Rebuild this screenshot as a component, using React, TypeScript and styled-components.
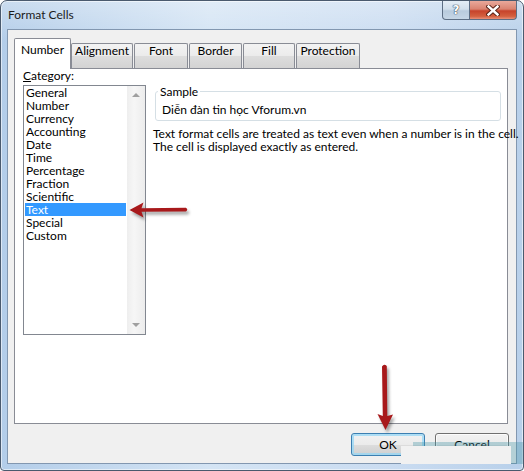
import React from "react";
import styled, { createGlobalStyle, css } from "styled-components";

const GlobalStyle = createGlobalStyle`
  body {
    margin: 0;
    background: #fff;
    font-family: "Lato", "Noto Sans", sans-serif;
    font-size: 12px;
    color: #000;
  }
`;

const Window = styled.div`
  position: relative;
  box-sizing: border-box;
  width: 524px;
  height: 471px;
  display: flex;
  flex-direction: column;
  border: 1px solid #4a5a6e;
  border-radius: 7px 7px 4px 4px;
  overflow: hidden;
  background: linear-gradient(180deg, rgba(255, 255, 255, 0.3), rgba(255, 255, 255, 0) 40px),
    linear-gradient(90deg, #b3cde9 0%, #d4e4f4 40%, #cadcf1 75%, #b8d0ea 100%);
  box-shadow: inset 0 0 0 1px rgba(255, 255, 255, 0.55);
`;

const TitleBar = styled.div`
  display: flex;
  align-items: flex-start;
  height: 28px;
  flex-shrink: 0;
`;

const Title = styled.span`
  padding-left: 7px;
  line-height: 28px;
  font-size: 12px;
  color: #1b1b1b;
`;

const CaptionButtons = styled.div`
  display: flex;
  margin-left: auto;
  margin-right: 6px;
`;

const CaptionButton = styled.div<{ $close?: boolean }>`
  box-sizing: border-box;
  width: ${(p) => (p.$close ? 47 : 28)}px;
  height: 19px;
  display: flex;
  align-items: center;
  justify-content: center;
  border: 1px solid #5d6e84;
  border-top: none;
  ${(p) =>
    p.$close
      ? css`
          border-radius: 0 0 4px 0;
          border-left: none;
          background: linear-gradient(180deg, #e9a99b 0%, #d98371 45%, #c7432b 55%, #d4603f 85%, #e8907a 100%);
        `
      : css`
          border-radius: 0 0 0 4px;
          background: linear-gradient(180deg, #e4edf6 0%, #d2dfec 45%, #b9cbdd 55%, #c6d6e6 100%);
        `}
`;

const HelpGlyph = styled.span`
  font-family: "DejaVu Sans", sans-serif;
  font-weight: bold;
  font-size: 12px;
  line-height: 12px;
  color: #fff;
  text-shadow: 0 0 1px #39495c, 0 0 1px #39495c, 0 0 1px #39495c;
`;

const Client = styled.div`
  flex: 1;
  display: flex;
  flex-direction: column;
  margin: 0 6px 6px;
  padding: 8px 8px 0 6px;
  border: 1px solid #8297b0;
  background: #f0f0f0;
`;

const TabStrip = styled.div`
  position: relative;
  z-index: 1;
  display: flex;
  align-items: flex-end;
  gap: 1px;
  height: 31px;
`;

const Tab = styled.div<{ $active?: boolean; $w: number }>`
  box-sizing: border-box;
  width: ${(p) => p.$w}px;
  text-align: center;
  line-height: 13px;
  border: 1px solid #898c95;
  border-bottom: none;
  border-radius: 2px 2px 0 0;
  ${(p) =>
    p.$active
      ? css`
          height: 31px;
          padding-top: 4px;
          margin-right: -1px;
          background: #fff;
          position: relative;
          z-index: 2;
        `
      : css`
          height: 25px;
          margin-bottom: 1px;
          background: linear-gradient(180deg, #f3f3f3 0%, #ebebeb 50%, #dddddd 51%, #d3d3d3 100%);
        `}
`;

const Panel = styled.div`
  box-sizing: border-box;
  height: 356px;
  margin-top: -1px;
  display: flex;
  gap: 7px;
  padding: 0 6px 0 8px;
  background: #fff;
  border: 1px solid #898c95;
`;

const CategoryColumn = styled.div`
  width: 123px;
  display: flex;
  flex-direction: column;
`;

const Label = styled.div`
  line-height: 13px;
`;

const ListBox = styled.div`
  box-sizing: border-box;
  height: 250px;
  margin-top: 3px;
  display: flex;
  border: 1px solid #828790;
`;

const List = styled.div`
  flex: 1;
  padding: 0 1px;
`;

const ListItem = styled.div<{ $selected?: boolean }>`
  height: 13px;
  line-height: 13px;
  padding-left: 1px;
  white-space: nowrap;
  ${(p) =>
    p.$selected &&
    css`
      background: #3399ff;
      color: #fff;
    `}
`;

const ScrollBar = styled.div`
  width: 18px;
  display: flex;
  flex-direction: column;
  align-items: center;
  justify-content: space-between;
  padding: 7px 0;
  box-sizing: border-box;
  background: linear-gradient(90deg, #eeeeee 0%, #f6f6f6 40%, #ececec 100%);
`;

const ScrollArrow = styled.div<{ $down?: boolean }>`
  width: 0;
  height: 0;
  border-left: 4px solid transparent;
  border-right: 4px solid transparent;
  ${(p) =>
    p.$down
      ? css`
          border-top: 4px solid #a0a0a0;
        `
      : css`
          border-bottom: 4px solid #a0a0a0;
        `}
`;

const DetailColumn = styled.div`
  flex: 1;
  padding-top: 16px;
  min-width: 0;
`;

const SampleBox = styled.fieldset`
  margin: 0 0 0 2px;
  padding: 5px 6px 4px;
  border: 1px solid #d5dfe5;
  border-radius: 3px;
  min-width: 0;
`;

const SampleLegend = styled.legend`
  padding: 0 2px;
  margin-left: -4px;
  line-height: 13px;
`;

const SampleText = styled.div`
  line-height: 13px;
`;

const Description = styled.div`
  margin-top: 6px;
  line-height: 13px;
  white-space: nowrap;
`;

const ButtonRow = styled.div`
  display: flex;
  justify-content: flex-end;
  gap: 10px;
  margin-top: 9px;
  margin-right: -1px;
`;

const Button = styled.div<{ $default?: boolean }>`
  box-sizing: border-box;
  width: 74px;
  height: 23px;
  display: flex;
  align-items: center;
  justify-content: center;
  border-radius: 3px;
  background: linear-gradient(180deg, #f2f2f2 0%, #ebebeb 50%, #dddddd 51%, #cfcfcf 100%);
  border: 1px solid ${(p) => (p.$default ? "#3c7fb1" : "#707070")};
  box-shadow: ${(p) => (p.$default ? "inset 0 0 0 2px rgba(150, 215, 245, 0.75)" : "inset 0 0 0 1px #fcfcfc")};
`;

const Overlay = styled.div<{ $x: number; $y: number; $w: number; $h: number; $bg: string }>`
  position: absolute;
  left: ${(p) => p.$x - 1}px;
  top: ${(p) => p.$y - 1}px;
  width: ${(p) => p.$w}px;
  height: ${(p) => p.$h}px;
  background: ${(p) => p.$bg};
`;

const ArrowSvg = styled.svg<{ $x: number; $y: number }>`
  position: absolute;
  left: ${(p) => p.$x - 1}px;
  top: ${(p) => p.$y - 1}px;
  overflow: visible;
`;

const categories = [
  "General",
  "Number",
  "Currency",
  "Accounting",
  "Date",
  "Time",
  "Percentage",
  "Fraction",
  "Scientific",
  "Text",
  "Special",
  "Custom",
];

const tabs: [string, number][] = [
  ["Number", 57],
  ["Alignment", 62],
  ["Font", 54],
  ["Border", 53],
  ["Fill", 52],
  ["Protection", 64],
];

const RedArrow = ({ x, y, w, h, d }: { x: number; y: number; w: number; h: number; d: string }) => (
  <ArrowSvg $x={x} $y={y} width={w} height={h} viewBox={`0 0 ${w} ${h}`}>
    <defs>
      <filter id={`blur${x}`} x="-30%" y="-30%" width="160%" height="160%">
        <feGaussianBlur stdDeviation="1.4" />
      </filter>
    </defs>
    <path d={d} fill="rgba(0,0,0,0.35)" transform="translate(2 3)" filter={`url(#blur${x})`} />
    <path d={d} fill="#a8191b" />
  </ArrowSvg>
);

export default function App() {
  return (
    <>
      <GlobalStyle />
      <Window>
        <TitleBar>
          <Title>Format Cells</Title>
          <CaptionButtons>
            <CaptionButton>
              <HelpGlyph>?</HelpGlyph>
            </CaptionButton>
            <CaptionButton $close>
              <svg width="14" height="11" viewBox="0 0 14 11">
                <path d="M2.5 1.5 L11.5 9.5 M11.5 1.5 L2.5 9.5" stroke="#5a2418" strokeWidth="4.4" strokeLinecap="square" />
                <path d="M2.5 1.5 L11.5 9.5 M11.5 1.5 L2.5 9.5" stroke="#fff" strokeWidth="2.4" strokeLinecap="square" />
              </svg>
            </CaptionButton>
          </CaptionButtons>
        </TitleBar>
        <Client>
          <TabStrip>
            {tabs.map(([name, w], i) => (
              <Tab key={name} $w={w} $active={i === 0}>
                {name}
              </Tab>
            ))}
          </TabStrip>
          <Panel>
            <CategoryColumn>
              <Label>
                <u>C</u>ategory:
              </Label>
              <ListBox>
                <List>
                  {categories.map((c) => (
                    <ListItem key={c} $selected={c === "Text"}>
                      {c}
                    </ListItem>
                  ))}
                </List>
                <ScrollBar>
                  <ScrollArrow />
                  <ScrollArrow $down />
                </ScrollBar>
              </ListBox>
            </CategoryColumn>
            <DetailColumn>
              <SampleBox>
                <SampleLegend>Sample</SampleLegend>
                <SampleText>Diễn đàn tin học Vforum.vn</SampleText>
              </SampleBox>
              <Description>
                Text format cells are treated as text even when a number is in the cell.
                <br />
                The cell is displayed exactly as entered.
              </Description>
            </DetailColumn>
          </Panel>
          <ButtonRow>
            <Button $default>OK</Button>
            <Button>Cancel</Button>
          </ButtonRow>
        </Client>

        <RedArrow
          x={126}
          y={198}
          w={70}
          h={26}
          d="M3.5 12 L17.5 4.5 L15.5 10.3 L60 9.8 Q62.5 11.5 60 13.6 L15.5 13.8 L17.5 19.5 Z"
        />
        <RedArrow
          x={372}
          y={360}
          w={26}
          h={76}
          d="M13.5 70 L5.5 54 L10.8 56 L10 6.5 Q12 3.5 14.8 6 L15.3 56 L21 54.5 Z"
        />

        <Overlay $x={413} $y={442} $w={111} $h={22} $bg="rgba(70, 150, 165, 0.35)" />
        <Overlay $x={401} $y={446} $w={110} $h={18} $bg="#f1f1f1" />
      </Window>
    </>
  );
}
